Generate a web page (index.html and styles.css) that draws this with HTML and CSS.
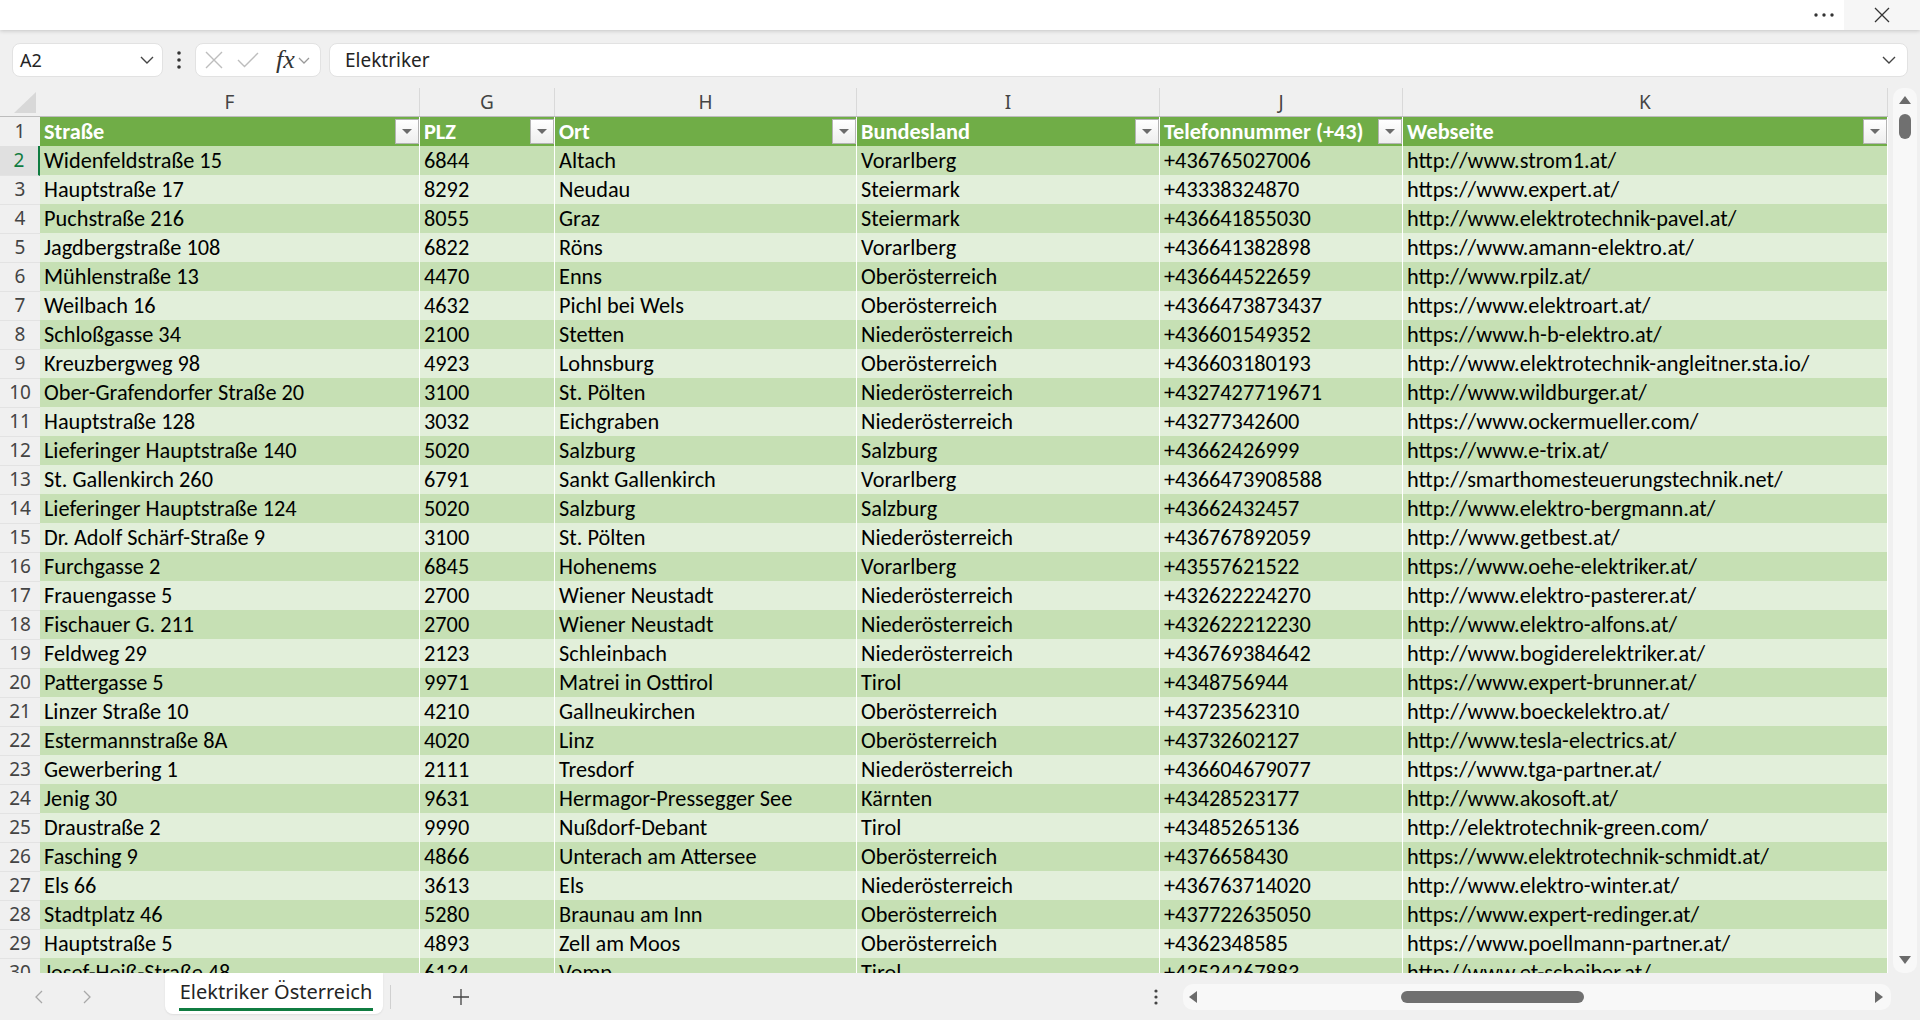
FILE: index.html
```html
<!DOCTYPE html>
<html lang="de">

<head>
    <meta charset="UTF-8">
    <title>Elektriker Österreich</title>
    <link rel="stylesheet" href="styles.css">
</head>

<body>

    <div class="titlebar">
        <div class="more">
            <svg width="20" height="4" viewBox="0 0 20 4"><circle cx="2" cy="2" r="1.7" fill="#333"/><circle cx="10" cy="2" r="1.7" fill="#333"/><circle cx="18" cy="2" r="1.7" fill="#333"/></svg>
        </div>
        <div class="close">
            <svg width="16" height="16" viewBox="0 0 16 16"><path d="M1 1l14 14M15 1L1 15" stroke="#333" stroke-width="1.3" fill="none"/></svg>
        </div>
    </div>

    <div class="formulabar">
        <div class="namebox">
            <span>A2</span>
            <svg width="14" height="8" viewBox="0 0 14 8"><path d="M1 1l6 6 6-6" fill="none" stroke="#444" stroke-width="1.4"/></svg>
        </div>
        <div class="kebab">
            <svg width="4" height="18" viewBox="0 0 4 18"><circle cx="2" cy="2" r="1.8" fill="#333"/><circle cx="2" cy="9" r="1.8" fill="#333"/><circle cx="2" cy="16" r="1.8" fill="#333"/></svg>
        </div>
        <div class="fxbox">
            <svg class="cancel" width="18" height="18" viewBox="0 0 18 18"><path d="M1 1l16 16M17 1L1 17" stroke="#bdbdbd" stroke-width="1.4" fill="none"/></svg>
            <svg class="enter" width="22" height="16" viewBox="0 0 22 16"><path d="M1 8l6.5 6.5L21 1" stroke="#bdbdbd" stroke-width="1.4" fill="none"/></svg>
            <span class="fx">fx</span>
            <svg class="fxdrop" width="12" height="7" viewBox="0 0 12 7"><path d="M1 1l5 5 5-5" fill="none" stroke="#999" stroke-width="1.3"/></svg>
        </div>
        <div class="formula">
            <span>Elektriker</span>
            <svg width="14" height="8" viewBox="0 0 14 8"><path d="M1 1l6 6 6-6" fill="none" stroke="#444" stroke-width="1.4"/></svg>
        </div>
    </div>

    <div class="sheet">
        <div class="grid">
            <div class="colheads">
                <div class="corner"><svg width="22" height="21" viewBox="0 0 22 21"><path d="M22 0V21H0z" fill="#d8d8d8"/></svg></div>
                <div>F</div><div>G</div><div>H</div><div>I</div><div>J</div><div>K</div>
            </div>

            <div class="row head">
                <div class="rh">1</div>
                <div class="c"><span>Straße</span><span class="filter"></span></div>
                <div class="c"><span>PLZ</span><span class="filter"></span></div>
                <div class="c"><span>Ort</span><span class="filter"></span></div>
                <div class="c"><span>Bundesland</span><span class="filter"></span></div>
                <div class="c"><span>Telefonnummer (+43)</span><span class="filter"></span></div>
                <div class="c"><span>Webseite</span><span class="filter"></span></div>
            </div>

            <div class="row dark active"><div class="rh">2</div><div class="c">Widenfeldstraße 15</div><div class="c">6844</div><div class="c">Altach</div><div class="c">Vorarlberg</div><div class="c">+436765027006</div><div class="c">http://www.strom1.at/</div></div>
            <div class="row light"><div class="rh">3</div><div class="c">Hauptstraße 17</div><div class="c">8292</div><div class="c">Neudau</div><div class="c">Steiermark</div><div class="c">+43338324870</div><div class="c">https://www.expert.at/</div></div>
            <div class="row dark"><div class="rh">4</div><div class="c">Puchstraße 216</div><div class="c">8055</div><div class="c">Graz</div><div class="c">Steiermark</div><div class="c">+436641855030</div><div class="c">http://www.elektrotechnik-pavel.at/</div></div>
            <div class="row light"><div class="rh">5</div><div class="c">Jagdbergstraße 108</div><div class="c">6822</div><div class="c">Röns</div><div class="c">Vorarlberg</div><div class="c">+436641382898</div><div class="c">https://www.amann-elektro.at/</div></div>
            <div class="row dark"><div class="rh">6</div><div class="c">Mühlenstraße 13</div><div class="c">4470</div><div class="c">Enns</div><div class="c">Oberösterreich</div><div class="c">+436644522659</div><div class="c">http://www.rpilz.at/</div></div>
            <div class="row light"><div class="rh">7</div><div class="c">Weilbach 16</div><div class="c">4632</div><div class="c">Pichl bei Wels</div><div class="c">Oberösterreich</div><div class="c">+4366473873437</div><div class="c">https://www.elektroart.at/</div></div>
            <div class="row dark"><div class="rh">8</div><div class="c">Schloßgasse 34</div><div class="c">2100</div><div class="c">Stetten</div><div class="c">Niederösterreich</div><div class="c">+436601549352</div><div class="c">https://www.h-b-elektro.at/</div></div>
            <div class="row light"><div class="rh">9</div><div class="c">Kreuzbergweg 98</div><div class="c">4923</div><div class="c">Lohnsburg</div><div class="c">Oberösterreich</div><div class="c">+436603180193</div><div class="c">http://www.elektrotechnik-angleitner.sta.io/</div></div>
            <div class="row dark"><div class="rh">10</div><div class="c">Ober-Grafendorfer Straße 20</div><div class="c">3100</div><div class="c">St. Pölten</div><div class="c">Niederösterreich</div><div class="c">+4327427719671</div><div class="c">http://www.wildburger.at/</div></div>
            <div class="row light"><div class="rh">11</div><div class="c">Hauptstraße 128</div><div class="c">3032</div><div class="c">Eichgraben</div><div class="c">Niederösterreich</div><div class="c">+43277342600</div><div class="c">https://www.ockermueller.com/</div></div>
            <div class="row dark"><div class="rh">12</div><div class="c">Lieferinger Hauptstraße 140</div><div class="c">5020</div><div class="c">Salzburg</div><div class="c">Salzburg</div><div class="c">+43662426999</div><div class="c">https://www.e-trix.at/</div></div>
            <div class="row light"><div class="rh">13</div><div class="c">St. Gallenkirch 260</div><div class="c">6791</div><div class="c">Sankt Gallenkirch</div><div class="c">Vorarlberg</div><div class="c">+4366473908588</div><div class="c">http://smarthomesteuerungstechnik.net/</div></div>
            <div class="row dark"><div class="rh">14</div><div class="c">Lieferinger Hauptstraße 124</div><div class="c">5020</div><div class="c">Salzburg</div><div class="c">Salzburg</div><div class="c">+43662432457</div><div class="c">http://www.elektro-bergmann.at/</div></div>
            <div class="row light"><div class="rh">15</div><div class="c">Dr. Adolf Schärf-Straße 9</div><div class="c">3100</div><div class="c">St. Pölten</div><div class="c">Niederösterreich</div><div class="c">+436767892059</div><div class="c">http://www.getbest.at/</div></div>
            <div class="row dark"><div class="rh">16</div><div class="c">Furchgasse 2</div><div class="c">6845</div><div class="c">Hohenems</div><div class="c">Vorarlberg</div><div class="c">+43557621522</div><div class="c">https://www.oehe-elektriker.at/</div></div>
            <div class="row light"><div class="rh">17</div><div class="c">Frauengasse 5</div><div class="c">2700</div><div class="c">Wiener Neustadt</div><div class="c">Niederösterreich</div><div class="c">+432622224270</div><div class="c">http://www.elektro-pasterer.at/</div></div>
            <div class="row dark"><div class="rh">18</div><div class="c">Fischauer G. 211</div><div class="c">2700</div><div class="c">Wiener Neustadt</div><div class="c">Niederösterreich</div><div class="c">+432622212230</div><div class="c">http://www.elektro-alfons.at/</div></div>
            <div class="row light"><div class="rh">19</div><div class="c">Feldweg 29</div><div class="c">2123</div><div class="c">Schleinbach</div><div class="c">Niederösterreich</div><div class="c">+436769384642</div><div class="c">http://www.bogiderelektriker.at/</div></div>
            <div class="row dark"><div class="rh">20</div><div class="c">Pattergasse 5</div><div class="c">9971</div><div class="c">Matrei in Osttirol</div><div class="c">Tirol</div><div class="c">+4348756944</div><div class="c">https://www.expert-brunner.at/</div></div>
            <div class="row light"><div class="rh">21</div><div class="c">Linzer Straße 10</div><div class="c">4210</div><div class="c">Gallneukirchen</div><div class="c">Oberösterreich</div><div class="c">+43723562310</div><div class="c">http://www.boeckelektro.at/</div></div>
            <div class="row dark"><div class="rh">22</div><div class="c">Estermannstraße 8A</div><div class="c">4020</div><div class="c">Linz</div><div class="c">Oberösterreich</div><div class="c">+43732602127</div><div class="c">http://www.tesla-electrics.at/</div></div>
            <div class="row light"><div class="rh">23</div><div class="c">Gewerbering 1</div><div class="c">2111</div><div class="c">Tresdorf</div><div class="c">Niederösterreich</div><div class="c">+436604679077</div><div class="c">https://www.tga-partner.at/</div></div>
            <div class="row dark"><div class="rh">24</div><div class="c">Jenig 30</div><div class="c">9631</div><div class="c">Hermagor-Pressegger See</div><div class="c">Kärnten</div><div class="c">+43428523177</div><div class="c">http://www.akosoft.at/</div></div>
            <div class="row light"><div class="rh">25</div><div class="c">Draustraße 2</div><div class="c">9990</div><div class="c">Nußdorf-Debant</div><div class="c">Tirol</div><div class="c">+43485265136</div><div class="c">http://elektrotechnik-green.com/</div></div>
            <div class="row dark"><div class="rh">26</div><div class="c">Fasching 9</div><div class="c">4866</div><div class="c">Unterach am Attersee</div><div class="c">Oberösterreich</div><div class="c">+4376658430</div><div class="c">https://www.elektrotechnik-schmidt.at/</div></div>
            <div class="row light"><div class="rh">27</div><div class="c">Els 66</div><div class="c">3613</div><div class="c">Els</div><div class="c">Niederösterreich</div><div class="c">+436763714020</div><div class="c">http://www.elektro-winter.at/</div></div>
            <div class="row dark"><div class="rh">28</div><div class="c">Stadtplatz 46</div><div class="c">5280</div><div class="c">Braunau am Inn</div><div class="c">Oberösterreich</div><div class="c">+437722635050</div><div class="c">https://www.expert-redinger.at/</div></div>
            <div class="row light"><div class="rh">29</div><div class="c">Hauptstraße 5</div><div class="c">4893</div><div class="c">Zell am Moos</div><div class="c">Oberösterreich</div><div class="c">+4362348585</div><div class="c">https://www.poellmann-partner.at/</div></div>
            <div class="row dark"><div class="rh">30</div><div class="c">Josef-Heiß-Straße 48</div><div class="c">6134</div><div class="c">Vomp</div><div class="c">Tirol</div><div class="c">+43524267883</div><div class="c">http://www.et-scheiber.at/</div></div>
        </div>

        <div class="vscroll">
            <svg class="arrow-up" width="12" height="8" viewBox="0 0 12 8"><path d="M6 0L12 8H0z" fill="#6b6b6b"/></svg>
            <div class="vthumb"></div>
            <svg class="arrow-down" width="12" height="8" viewBox="0 0 12 8"><path d="M0 0H12L6 8z" fill="#6b6b6b"/></svg>
        </div>
    </div>

    <div class="tabbar">
        <div class="navbtn">
            <svg width="8" height="14" viewBox="0 0 8 14"><path d="M7 1L1 7l6 6" fill="none" stroke="#a8a8a8" stroke-width="1.3"/></svg>
        </div>
        <div class="navbtn">
            <svg width="8" height="14" viewBox="0 0 8 14"><path d="M1 1l6 6-6 6" fill="none" stroke="#a8a8a8" stroke-width="1.3"/></svg>
        </div>
        <div class="tab"><span>Elektriker Österreich</span></div>
        <div class="divider"></div>
        <div class="addsheet">
            <svg width="18" height="18" viewBox="0 0 18 18"><path d="M9 1v16M1 9h16" stroke="#444" stroke-width="1.3" fill="none"/></svg>
        </div>
        <div class="tabkebab">
            <svg width="4" height="16" viewBox="0 0 4 16"><circle cx="2" cy="2" r="1.6" fill="#444"/><circle cx="2" cy="8" r="1.6" fill="#444"/><circle cx="2" cy="14" r="1.6" fill="#444"/></svg>
        </div>
        <div class="hscroll">
            <svg width="8" height="12" viewBox="0 0 8 12"><path d="M0 6L8 0V12z" fill="#6b6b6b"/></svg>
            <div class="hthumb"></div>
            <svg width="8" height="12" viewBox="0 0 8 12"><path d="M8 6L0 0V12z" fill="#6b6b6b"/></svg>
        </div>
    </div>

</body>

</html>
```

FILE: styles.css
```css
* {
    box-sizing: border-box;
}

body {
    margin: 0;
    width: 1920px;
    height: 1020px;
    overflow: hidden;
    background: #f0f0f0;
    font-family: 'Noto Sans', 'Open Sans', sans-serif;
    color: #242424;
    display: flex;
    flex-direction: column;
}

/* top strip */
.titlebar {
    height: 30px;
    flex-shrink: 0;
    background: #fff;
    box-shadow: 0 1px 4px rgba(0, 0, 0, 0.18);
    display: flex;
    justify-content: flex-end;
}

.titlebar .more {
    width: 40px;
    display: flex;
    align-items: center;
    justify-content: center;
}

.titlebar .close {
    width: 76px;
    background: #f6f6f6;
    display: flex;
    align-items: center;
    justify-content: center;
}

/* formula bar */
.formulabar {
    display: flex;
    align-items: center;
    height: 34px;
    margin-top: 13px;
    padding-left: 12px;
    flex-shrink: 0;
}

.namebox,
.fxbox,
.formula {
    height: 34px;
    background: #fff;
    border: 1px solid #e2e2e2;
    border-radius: 8px;
    display: flex;
    align-items: center;
}

.namebox {
    width: 151px;
    justify-content: space-between;
    padding: 0 8px 0 7px;
    font-size: 18px;
}

.kebab {
    width: 32px;
    display: flex;
    justify-content: center;
}

.fxbox {
    width: 126px;
    padding-left: 9px;
}

.fxbox .enter {
    margin-left: 14px;
}

.fxbox .fx {
    margin-left: 17px;
    font-family: 'Liberation Serif', 'DejaVu Serif', serif;
    font-style: italic;
    font-size: 26px;
    color: #333;
    line-height: 1;
}

.fxbox .fxdrop {
    margin-left: 3px;
}

.formula {
    width: 1579px;
    margin-left: 8px;
    justify-content: space-between;
    padding: 0 11px 0 15px;
    font-size: 19px;
}

/* sheet */
.sheet {
    display: flex;
    margin-top: 11px;
    height: 885px;
    flex-shrink: 0;
}

.grid {
    width: 1888px;
    overflow: hidden;
}

.colheads,
.row {
    display: grid;
    grid-template-columns: 40px 380px 135px 302px 303px 243px 485px;
    height: 29px;
}

.colheads {
    border-bottom: 1px solid #bdbdbd;
}

.colheads div {
    text-align: center;
    font-size: 19px;
    line-height: 28px;
    color: #444;
    border-right: 1px solid #d9d9d9;
}

.colheads .corner {
    display: flex;
    justify-content: flex-end;
    align-items: flex-end;
    padding: 0 4px 3px 0;
    border-right: none;
}

.row .rh {
    text-align: center;
    font-size: 19px;
    line-height: 29px;
    color: #444;
    border-bottom: 1px solid #e3e3e3;
}

.row.active .rh {
    background: #e0e0e0;
    color: #107c41;
    border-right: 2px solid #107c41;
}

.row .c {
    font-family: Carlito, Lato, sans-serif;
    font-size: 22.3px;
    line-height: 30px;
    color: #000;
    padding: 0 4px;
    white-space: nowrap;
    overflow: hidden;
    border-right: 1px solid #fff;
    border-bottom: 1px solid #fff;
}

.row.dark .c {
    background: #c6e0b4;
}

.row.light .c {
    background: #e2efda;
}

.row.head .c {
    background: #70ad47;
    color: #fff;
    font-weight: 700;
    display: flex;
    align-items: center;
    justify-content: space-between;
    padding-right: 0;
}

.filter {
    width: 24px;
    height: 25px;
    border: 1px solid #b4b4b4;
    background: linear-gradient(#ffffff, #eeeeee);
    display: flex;
    align-items: center;
    justify-content: center;
}

.filter::after {
    content: '';
    border-left: 5px solid transparent;
    border-right: 5px solid transparent;
    border-top: 5px solid #6b6b6b;
}

/* scrollbars */
.vscroll {
    width: 24px;
    margin-left: 5px;
    background: #f8f8f8;
    border-radius: 10px;
    display: flex;
    flex-direction: column;
    align-items: center;
    padding: 8px 0 9px 0;
}

.vthumb {
    width: 12px;
    height: 25px;
    margin-top: 10px;
    border-radius: 6px;
    background: #707070;
}

.vscroll .arrow-down {
    margin-top: auto;
}

.tabbar {
    height: 47px;
    display: flex;
    align-items: center;
    flex-shrink: 0;
}

.navbtn {
    width: 48px;
    display: flex;
    justify-content: center;
}

.navbtn:first-child {
    margin-left: 15px;
}

.tab {
    align-self: flex-start;
    margin-left: 54px;
    width: 218px;
    height: 41px;
    background: #fff;
    border-radius: 0 0 8px 8px;
    box-shadow: 0 1px 2px rgba(0, 0, 0, 0.08);
    display: flex;
    justify-content: center;
    padding: 4px 0 0 4px;
}

.tab span {
    font-size: 20px;
    line-height: 29px;
    height: 34px;
    padding: 0 1px;
    border-bottom: 3px solid #107c41;
    color: #242424;
    white-space: nowrap;
}

.divider {
    width: 1px;
    height: 24px;
    margin-left: 7px;
    background: #d0d0d0;
}

.addsheet {
    width: 40px;
    margin-left: 50px;
    display: flex;
    justify-content: center;
}

.tabkebab {
    width: 20px;
    margin-left: 665px;
    display: flex;
    justify-content: center;
}

.hscroll {
    width: 708px;
    height: 26px;
    margin-left: 17px;
    background: #f8f8f8;
    border-radius: 10px;
    display: flex;
    align-items: center;
    padding: 0 8px 0 6px;
}

.hthumb {
    width: 183px;
    height: 12px;
    margin-left: 204px;
    margin-right: auto;
    border-radius: 6px;
    background: #707070;
}
```
